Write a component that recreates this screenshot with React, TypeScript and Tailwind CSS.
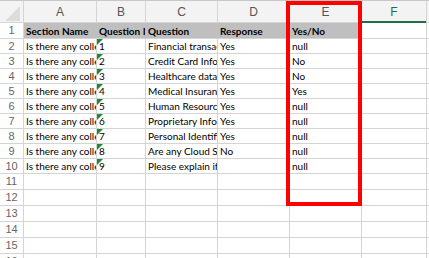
import React from "react";

const cols = ["A", "B", "C", "D", "E", "F", "G"];
const widths = [73, 49, 72, 72, 72, 65, 40];

type Row = { a: string; b: string; c: string; d: string; e: string };

const data: Row[] = [
  { a: "Is there any collection of the following data?", b: "1", c: "Financial transactions", d: "Yes", e: "null" },
  { a: "Is there any collection of the following data?", b: "2", c: "Credit Card Information", d: "Yes", e: "No" },
  { a: "Is there any collection of the following data?", b: "3", c: "Healthcare data", d: "Yes", e: "No" },
  { a: "Is there any collection of the following data?", b: "4", c: "Medical Insurance", d: "Yes", e: "Yes" },
  { a: "Is there any collection of the following data?", b: "5", c: "Human Resources", d: "Yes", e: "null" },
  { a: "Is there any collection of the following data?", b: "6", c: "Proprietary Information", d: "Yes", e: "null" },
  { a: "Is there any collection of the following data?", b: "7", c: "Personal Identifiable Information", d: "Yes", e: "null" },
  { a: "Is there any collection of the following data?", b: "8", c: "Are any Cloud Services used?", d: "No", e: "null" },
  { a: "Is there any collection of the following data?", b: "9", c: "Please explain if applicable", d: "", e: "null" },
];

const font = { fontFamily: "Lato, 'Liberation Sans', sans-serif" };

function Cell({
  w,
  children,
  className = "",
  tri = false,
}: {
  w: number;
  children?: React.ReactNode;
  className?: string;
  tri?: boolean;
}) {
  return (
    <div
      className={`relative shrink-0 overflow-hidden whitespace-nowrap border-r border-[#d4d4d4] pl-[2px] flex items-end pb-[1px] text-[10px] leading-[12px] text-black ${className}`}
      style={{ width: w }}
    >
      {tri && (
        <svg className="absolute left-0 top-0" width="7" height="7" viewBox="0 0 7 7">
          <polygon points="0,0 6,0 0,6" fill="#1a8a36" />
        </svg>
      )}
      {children}
    </div>
  );
}

function RowHead({ n }: { n: number }) {
  return (
    <div
      className="shrink-0 w-[24px] border-r border-[#d4d4d4] flex items-center justify-center text-[11px] text-[#666] bg-white"
      style={{ fontFamily: "'Liberation Sans', sans-serif" }}
    >
      {n}
    </div>
  );
}

export default function App() {
  return (
    <div className="relative w-[429px] h-[258px] overflow-hidden bg-white" style={font}>
      {/* column header */}
      <div className="flex h-[23px] border-t border-[#c8c8c8] border-b border-b-[#d4d4d4] bg-[#f3f3f3]">
        <div className="relative shrink-0 w-[24px] border-r border-[#d4d4d4]">
          <svg className="absolute left-[5px] top-[5px]" width="15" height="15" viewBox="0 0 15 15">
            <polygon points="15,0 15,15 0,15" fill="#dcdcdc" />
          </svg>
        </div>
        {cols.map((c, i) => (
          <div
            key={c}
            className={`relative shrink-0 flex items-center justify-center border-r border-[#d4d4d4] text-[12px] ${
              c === "F" ? "text-[#1e7145]" : "text-[#555]"
            }`}
            style={{ width: widths[i], fontFamily: "'Liberation Sans', sans-serif" }}
          >
            {c}
            {c === "F" && <div className="absolute left-0 right-0 bottom-[-1px] h-[2px] bg-[#1e7145]" />}
          </div>
        ))}
      </div>

      {/* row 1 */}
      <div className="flex h-[16px] border-b border-[#d4d4d4]">
        <RowHead n={1} />
        <Cell w={73} className="font-bold bg-[#bfbfbf] border-r-[#bfbfbf]">Section Name</Cell>
        <Cell w={49} className="font-bold bg-[#bfbfbf] border-r-[#bfbfbf]">Question ID</Cell>
        <Cell w={72} className="font-bold bg-[#bfbfbf] border-r-[#bfbfbf]">Question</Cell>
        <Cell w={72} className="font-bold bg-[#bfbfbf] border-r-[#bfbfbf]">Response</Cell>
        <Cell w={72} className="font-bold bg-[#bfbfbf]">Yes/No</Cell>
        <Cell w={65} />
        <Cell w={40} />
      </div>

      {data.map((r, i) => (
        <div key={i} className="flex h-[15px] border-b border-[#d4d4d4]">
          <RowHead n={i + 2} />
          <Cell w={73}>{r.a}</Cell>
          <Cell w={49} tri>
            {r.b}
          </Cell>
          <Cell w={72}>{r.c}</Cell>
          <Cell w={72}>{r.d}</Cell>
          <Cell w={72}>{r.e}</Cell>
          <Cell w={65} />
          <Cell w={40} />
        </div>
      ))}

      {[11, 12, 13, 14, 15, 16].map((n) => (
        <div key={n} className="flex h-[16px] border-b border-[#d4d4d4]">
          <RowHead n={n} />
          {widths.map((w, j) => (
            <Cell key={j} w={w} />
          ))}
        </div>
      ))}

      {/* red highlight box */}
      <div className="absolute left-[286px] top-[1px] w-[76px] h-[205px] border-4 border-[#ff0000]" />
    </div>
  );
}
